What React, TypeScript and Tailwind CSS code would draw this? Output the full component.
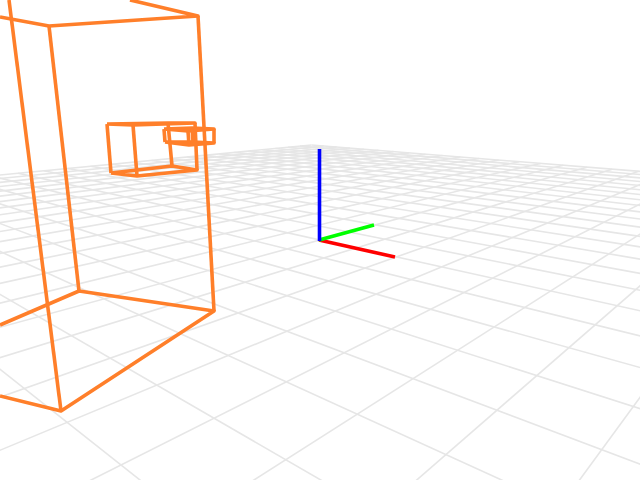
const f = 585;
const cam = [4.108, -4.563, 1.555];
const dist = Math.hypot(cam[0], cam[1], cam[2]);
const flat = Math.hypot(cam[0], cam[1]);
const step = 0.5;

// camera looks at the origin, z is up
const se = cam[2] / dist;
const ce = flat / dist;
const ct = cam[0] / flat;
const st = -cam[1] / flat;

type P = [number, number];

const depth = (x: number, y: number) => dist - ce * ct * x + ce * st * y;
const project = (x: number, y: number): P => {
	const d = depth(x, y);
	return [
		320 + (f * (st * x + ct * y)) / d,
		240 - (f * (-se * ct * x + se * st * y)) / d,
	];
};

function gridLine(x0: number, y0: number, x1: number, y1: number) {
	const near = 0.2;
	const d0 = depth(x0, y0);
	const d1 = depth(x1, y1);
	if (d0 < near && d1 < near) return null;
	let a: P = [x0, y0];
	let b: P = [x1, y1];
	if (d0 < near) {
		const t = (near - d0) / (d1 - d0);
		a = [x0 + (x1 - x0) * t, y0 + (y1 - y0) * t];
	}
	if (d1 < near) {
		const t = (near - d0) / (d1 - d0);
		b = [x0 + (x1 - x0) * t, y0 + (y1 - y0) * t];
	}
	const p = project(a[0], a[1]);
	const q = project(b[0], b[1]);
	return `M${p[0].toFixed(2)} ${p[1].toFixed(2)}L${q[0].toFixed(2)} ${q[1].toFixed(2)}`;
}

const xMin = -8;
const xMax = 9;
const yMin = -9;
const yMax = 8.5;

const gridPaths: string[] = [];
for (let x = xMin; x <= xMax; x += step) {
	const d = gridLine(x, yMin, x, yMax);
	if (d) gridPaths.push(d);
}
for (let y = yMin; y <= yMax; y += step) {
	const d = gridLine(xMin, y, xMax, y);
	if (d) gridPaths.push(d);
}

const boxes = [
	// big box, mostly out of frame
	'M9 0L61 411',
	'M0 17L49 26L198 16L130 0',
	'M49 26L79 291',
	'M198 16L214 311',
	'M0 325L79 291L214 311L61 411L0 396',
	// middle box
	'M107 124L133 125L195 123L168 123L107 124',
	'M111 173L137 176L197 170L172 166L111 173',
	'M107 124L111 173',
	'M133 125L137 176',
	'M195 123L197 170',
	'M168 123L172 166',
	// small box
	'M164 129L188 131L214 129L192 128L164 129',
	'M165 142L189 145L214 143L193 142L165 142',
	'M164 129L165 142',
	'M188 131L189 145',
	'M214 129L214 143',
	'M192 128L193 142',
];

export default function App() {
	return (
		<div className="h-[480px] w-[640px] overflow-hidden bg-white">
			<svg width="640" height="480" viewBox="0 0 640 480" className="block">
				<g stroke="#e6e6e6" strokeWidth="1.6" fill="none">
					{gridPaths.map((d) => (
						<path key={d} d={d} />
					))}
				</g>
				<g stroke="#ff7f2a" strokeWidth="3.6" fill="none" strokeLinejoin="round">
					{boxes.map((d) => (
						<path key={d} d={d} />
					))}
				</g>
				<g strokeWidth="3.6" fill="none">
					<path d="M319 240L395 257" stroke="#ff0000" />
					<path d="M319 240L374 225" stroke="#00ff00" />
					<path d="M319.5 241L319.5 149" stroke="#0000ff" />
				</g>
			</svg>
		</div>
	);
}
